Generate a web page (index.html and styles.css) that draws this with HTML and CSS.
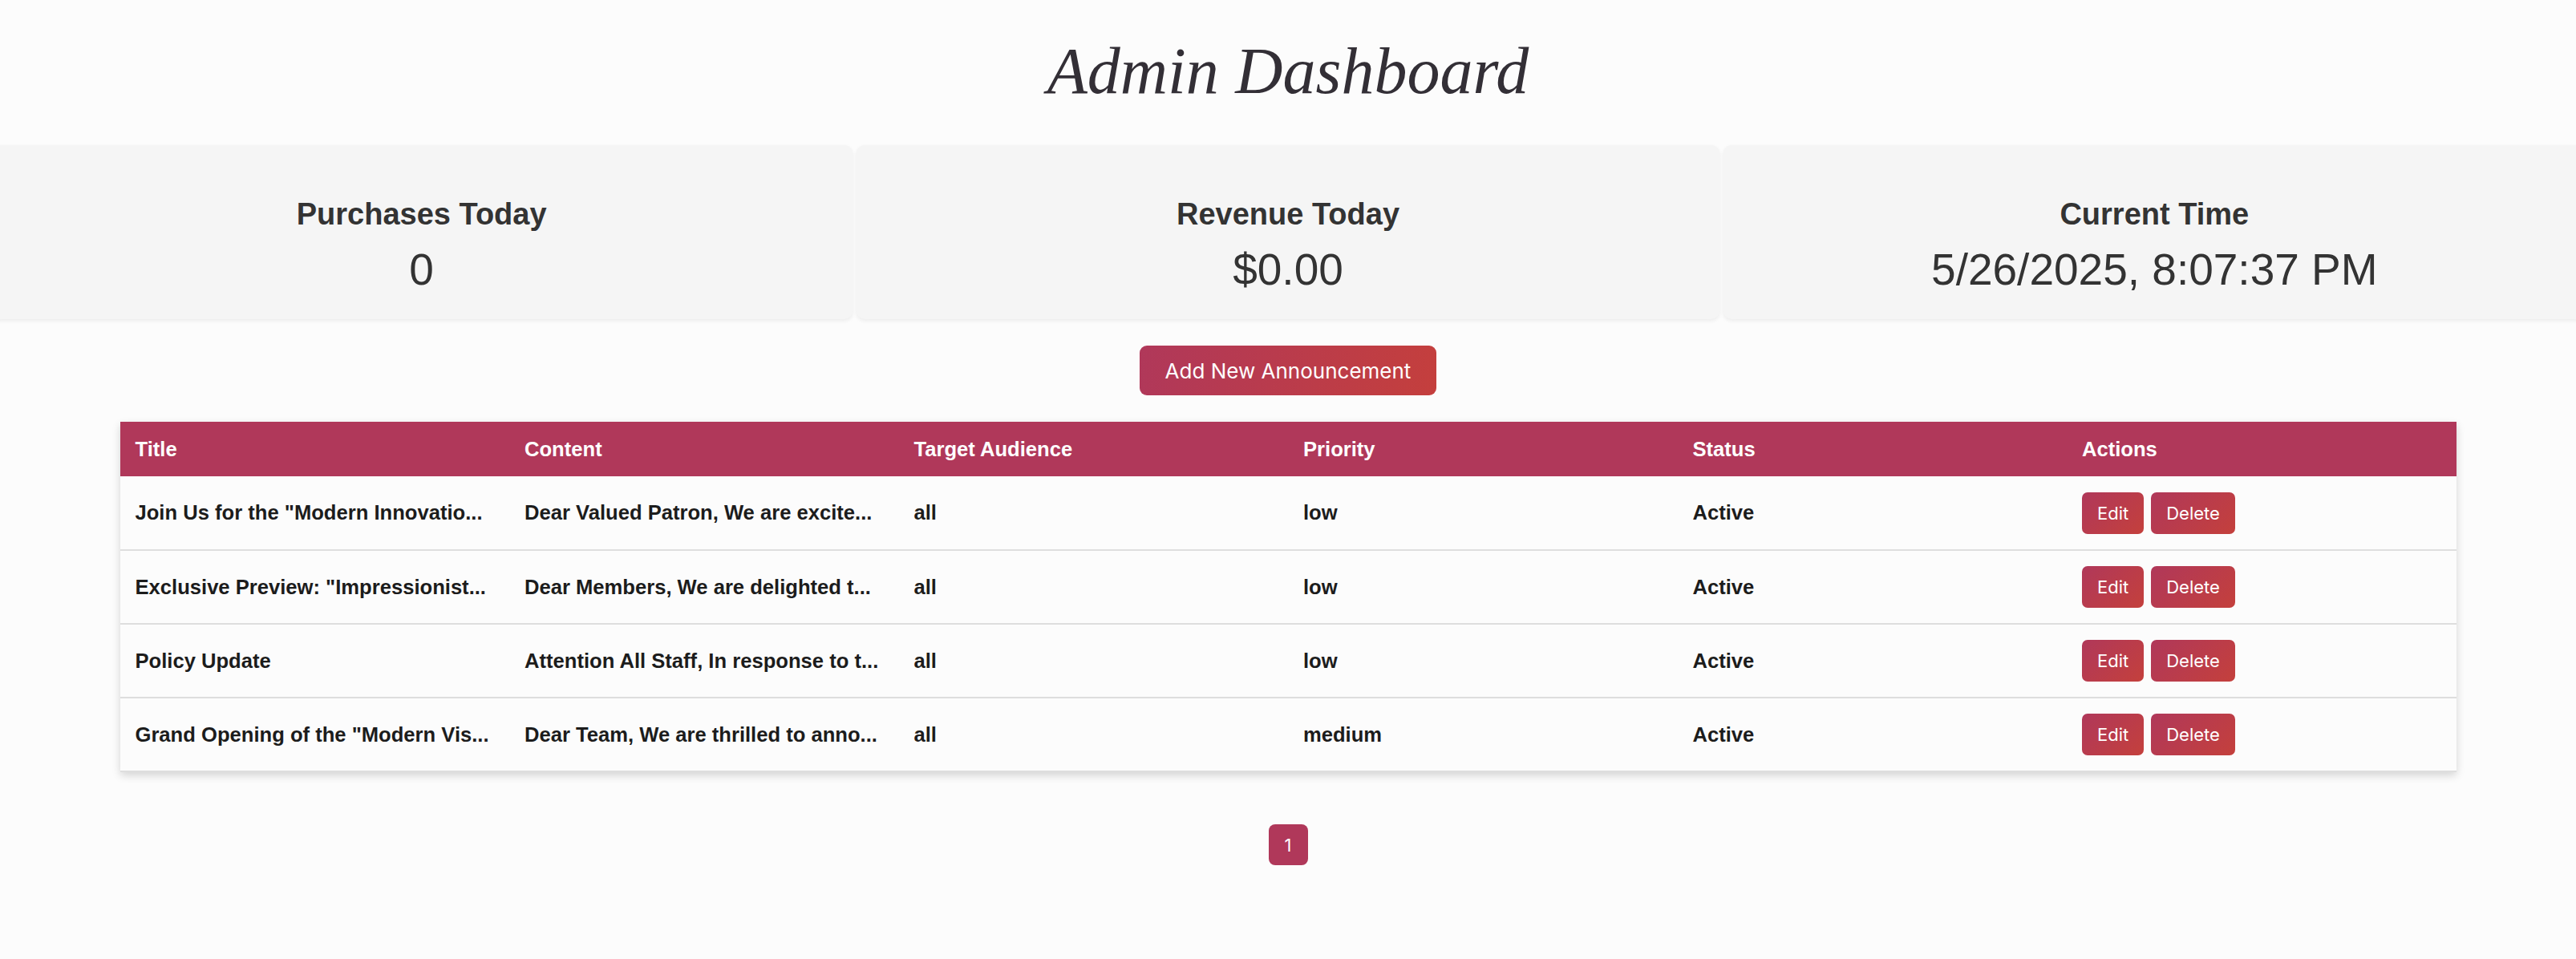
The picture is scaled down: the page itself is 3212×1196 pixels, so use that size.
FILE: index.html
```html
<!DOCTYPE html>
<html lang="en">
<head>
<meta charset="utf-8">
<title>Admin Dashboard</title>
<link rel="stylesheet" href="styles.css">
</head>
<body>
  <h1 class="page-title">Admin Dashboard</h1>

  <section class="stats">
    <div class="stat-card">
      <h3 class="stat-label">Purchases Today</h3>
      <p class="stat-value">0</p>
    </div>
    <div class="stat-card">
      <h3 class="stat-label">Revenue Today</h3>
      <p class="stat-value">$0.00</p>
    </div>
    <div class="stat-card">
      <h3 class="stat-label">Current Time</h3>
      <p class="stat-value">5/26/2025, 8:07:37 PM</p>
    </div>
  </section>

  <div class="toolbar">
    <button class="btn-primary">Add New Announcement</button>
  </div>

  <table class="ann-table">
    <thead>
      <tr>
        <th>Title</th>
        <th>Content</th>
        <th>Target Audience</th>
        <th>Priority</th>
        <th>Status</th>
        <th>Actions</th>
      </tr>
    </thead>
    <tbody>
      <tr>
        <td>Join Us for the "Modern Innovatio...</td>
        <td>Dear Valued Patron, We are excite...</td>
        <td>all</td>
        <td>low</td>
        <td>Active</td>
        <td><div class="actions"><button class="btn-sm">Edit</button><button class="btn-sm">Delete</button></div></td>
      </tr>
      <tr>
        <td>Exclusive Preview: "Impressionist...</td>
        <td>Dear Members, We are delighted t...</td>
        <td>all</td>
        <td>low</td>
        <td>Active</td>
        <td><div class="actions"><button class="btn-sm">Edit</button><button class="btn-sm">Delete</button></div></td>
      </tr>
      <tr>
        <td>Policy Update</td>
        <td>Attention All Staff, In response to t...</td>
        <td>all</td>
        <td>low</td>
        <td>Active</td>
        <td><div class="actions"><button class="btn-sm">Edit</button><button class="btn-sm">Delete</button></div></td>
      </tr>
      <tr>
        <td>Grand Opening of the "Modern Vis...</td>
        <td>Dear Team, We are thrilled to anno...</td>
        <td>all</td>
        <td>medium</td>
        <td>Active</td>
        <td><div class="actions"><button class="btn-sm">Edit</button><button class="btn-sm">Delete</button></div></td>
      </tr>
    </tbody>
  </table>

  <nav class="pagination">
    <button class="page-btn">1</button>
  </nav>
</body>
</html>
```

FILE: styles.css
```css
* { box-sizing: border-box; }

html, body {
  margin: 0;
  padding: 0;
  background: #fcfcfc;
  overflow: hidden;
}

body {
  font-family: "Liberation Sans", Arial, sans-serif;
  color: #333;
}

.page-title {
  margin: 39px 0 42px;
  font-family: "Liberation Serif", "Times New Roman", serif;
  font-style: italic;
  font-weight: normal;
  font-size: 82px;
  line-height: 100px;
  text-align: center;
  color: #332f36;
}

.stats {
  display: grid;
  grid-template-columns: repeat(3, 1fr);
  gap: 5px;
  margin: 0 -12px;
}

.stat-card {
  background: #f5f5f5;
  border-radius: 10px;
  box-shadow: 0 2px 5px rgba(0, 0, 0, 0.07);
  padding: 64px 20px 30px;
  text-align: center;
}

.stat-label {
  margin: 0 0 16px;
  font-size: 38px;
  line-height: 44px;
  font-weight: bold;
  color: #333;
}

.stat-value {
  margin: 0;
  font-size: 55px;
  line-height: 63px;
  color: #333;
}

.toolbar {
  display: flex;
  justify-content: center;
  margin: 33px 0;
}

.btn-primary {
  height: 62px;
  padding: 0 32px;
  border: none;
  border-radius: 9px;
  background: linear-gradient(100deg, #b0385a, #c43f3d);
  color: #fff;
  font-family: Inter, "Noto Sans", sans-serif;
  font-size: 26px;
  cursor: pointer;
}

.ann-table {
  width: 2913px;
  margin: 0 auto;
  border-collapse: collapse;
  table-layout: fixed;
  background: #fcfcfc;
  box-shadow: 0 4px 10px rgba(0, 0, 0, 0.16);
}

.ann-table th,
.ann-table td {
  padding: 0 19px;
  text-align: left;
  font-size: 25.6px;
  font-weight: bold;
  white-space: nowrap;
  overflow: hidden;
  text-overflow: ellipsis;
}

.ann-table th {
  height: 68px;
  background: #b0385a;
  color: #fff;
}

.ann-table td {
  height: 92px;
  color: #1c1c1c;
  border-bottom: 2px solid #dedede;
}

.actions {
  display: flex;
  gap: 9px;
}

.btn-sm {
  height: 52px;
  padding: 0 19px;
  border: none;
  border-radius: 7px;
  background: linear-gradient(135deg, #b0385a, #c4403c);
  color: #fff;
  font-family: Inter, "Noto Sans", sans-serif;
  font-size: 22px;
  cursor: pointer;
}

.pagination {
  display: flex;
  justify-content: center;
  margin-top: 65px;
}

.page-btn {
  width: 49px;
  height: 51px;
  padding: 0;
  border: none;
  border-radius: 8px;
  background: #b0385a;
  color: #fff;
  font-family: Inter, "Noto Sans", sans-serif;
  font-size: 22px;
}
```
